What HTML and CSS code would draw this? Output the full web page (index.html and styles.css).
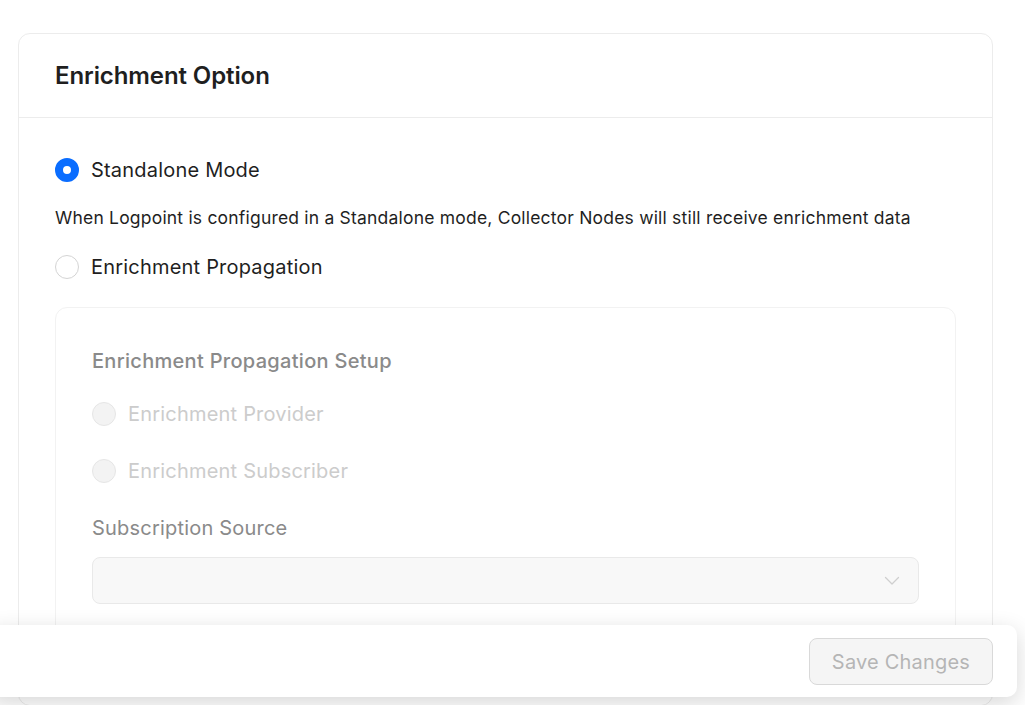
FILE: index.html
```html
<!DOCTYPE html>
<html>
<head>
<meta charset="utf-8">
<link rel="stylesheet" href="styles.css">
</head>
<body>
<div class="page">
  <section class="card">
    <header class="card-header">
      <h1 class="card-title">Enrichment Option</h1>
    </header>
    <div class="card-body">
      <label class="radio-row">
        <span class="radio radio-checked"></span>
        <span class="radio-label">Standalone Mode</span>
      </label>
      <p class="description">When Logpoint is configured in a Standalone mode, Collector Nodes will still receive enrichment data</p>
      <label class="radio-row radio-row-second">
        <span class="radio"></span>
        <span class="radio-label">Enrichment Propagation</span>
      </label>

      <div class="setup-box">
        <h2 class="setup-title">Enrichment Propagation Setup</h2>
        <label class="radio-row disabled first-opt">
          <span class="radio radio-disabled"></span>
          <span class="radio-label">Enrichment Provider</span>
        </label>
        <label class="radio-row disabled second-opt">
          <span class="radio radio-disabled"></span>
          <span class="radio-label">Enrichment Subscriber</span>
        </label>
        <div class="field-label">Subscription Source</div>
        <div class="select">
          <svg class="chevron" width="16" height="10" viewBox="0 0 16 10"><path d="M1.5 1.5 L8 8 L14.5 1.5" fill="none" stroke="#cfcfcf" stroke-width="1.3" stroke-linecap="round" stroke-linejoin="round"/></svg>
        </div>
      </div>
    </div>
  </section>
</div>
<footer class="footer">
  <button class="save-btn" disabled>Save Changes</button>
</footer>
</body>
</html>
```
FILE: styles.css
```css
html, body {
  margin: 0;
  padding: 0;
  background: #ffffff;
  font-family: Inter, "Noto Sans", "Liberation Sans", sans-serif;
  color: #1f1f1f;
}

.page {
  height: 705px;
  box-sizing: border-box;
  padding: 33px 32px 0 18px;
  overflow: hidden;
}

.card {
  border: 1px solid #ececec;
  border-radius: 12px;
  background: #fff;
  padding-bottom: 40px;
}

.card-header {
  height: 83px;
  border-bottom: 1px solid #ececec;
  display: flex;
  align-items: center;
  padding: 0 36px;
}

.card-title {
  margin: 0;
  font-size: 24px;
  font-weight: 600;
  color: #1f1f1f;
  letter-spacing: -0.1px;
}

.card-body {
  padding: 40px 36px 0 36px;
}

.radio-row {
  display: flex;
  align-items: center;
  gap: 12px;
  height: 24px;
}

.radio {
  box-sizing: border-box;
  width: 24px;
  height: 24px;
  border-radius: 50%;
  border: 1px solid #d4d4d4;
  background: #fff;
  flex: none;
}

.radio-checked {
  border: 8px solid #0a6dff;
  background: #fff;
}

.radio-disabled {
  background: #f3f3f3;
  border-color: #e6e6e6;
}

.radio-label {
  font-size: 20px;
  letter-spacing: 0.2px;
  color: #1f1f1f;
}

.description {
  margin: 24px 0 0 0;
  font-size: 17.5px;
  letter-spacing: 0.2px;
  line-height: 24px;
  color: #1f1f1f;
}

.radio-row-second {
  margin-top: 25px;
}

.setup-box {
  margin-top: 28px;
  border: 1px solid #f2f2f2;
  border-radius: 12px;
  padding: 41px 36px 60px 36px;
}

.setup-title {
  margin: 0;
  font-size: 20px;
  font-weight: 500;
  letter-spacing: 0.3px;
  line-height: 24px;
  color: #8a8a8a;
}

.disabled .radio-label {
  color: #cccccc;
}

.first-opt {
  margin-top: 29px;
}

.second-opt {
  margin-top: 33px;
}

.field-label {
  margin-top: 33px;
  font-size: 20px;
  letter-spacing: 0.2px;
  line-height: 24px;
  color: #8a8a8a;
}

.select {
  margin-top: 17px;
  height: 45px;
  border: 1px solid #e9e9e9;
  border-radius: 8px;
  background: #f8f8f8;
  display: flex;
  align-items: center;
  justify-content: flex-end;
  padding-right: 18px;
}

.footer {
  position: fixed;
  left: -12px;
  right: 8px;
  bottom: 8px;
  height: 72px;
  background: #fff;
  border-radius: 10px;
  box-shadow: 0 6px 22px rgba(0, 0, 0, 0.16);
  display: flex;
  align-items: center;
  justify-content: flex-end;
  padding-right: 24px;
}

.save-btn {
  width: 184px;
  height: 47px;
  border: 1px solid #d9d9d9;
  border-radius: 8px;
  background: #f5f5f5;
  color: #b5b5b5;
  font-family: Inter, "Noto Sans", "Liberation Sans", sans-serif;
  font-size: 20px;
  letter-spacing: 0.2px;
  padding: 0;
  margin-top: 1px;
}
```
